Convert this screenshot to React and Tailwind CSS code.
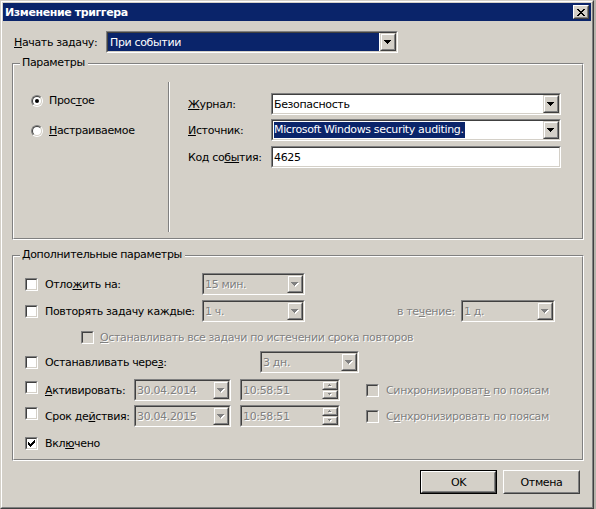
import React from "react";

const dis = "text-[#808080] [text-shadow:1px_1px_0_#ffffff]";

function Tri({ rows, color, shadow }) {
  const w = Math.max(...rows);
  return (
    <svg width={w + 1} height={rows.length + 1} shapeRendering="crispEdges" className="block">
      {shadow &&
        rows.map((r, i) => (
          <rect key={"s" + i} x={(w - r) / 2 + 1} y={i + 1} width={r} height="1" fill="#ffffff" />
        ))}
      {rows.map((r, i) => (
        <rect key={i} x={(w - r) / 2} y={i} width={r} height="1" fill={color} />
      ))}
    </svg>
  );
}

function Raised({ className = "", children }) {
  return (
    <div className={`border border-t-[#d4d0c8] border-l-[#d4d0c8] border-r-[#404040] border-b-[#404040] ${className}`}>
      <div className="h-full w-full border border-t-white border-l-white border-r-[#808080] border-b-[#808080] bg-[#d4d0c8] flex items-center justify-center">
        {children}
      </div>
    </div>
  );
}

function Sunken({ className = "", inner = "bg-white", children }) {
  return (
    <div className={`border border-t-[#808080] border-l-[#808080] border-r-white border-b-white ${className}`}>
      <div className={`h-full w-full border border-t-[#404040] border-l-[#404040] border-r-[#d4d0c8] border-b-[#d4d0c8] flex ${inner}`}>
        {children}
      </div>
    </div>
  );
}

function Combo({ className = "", text, disabled, selectedAll, selectedText }) {
  return (
    <Sunken className={`h-[22px] shrink-0 ${className}`} inner={disabled ? "bg-[#d4d0c8]" : "bg-white"}>
      <div className="flex-1 flex items-center min-w-0 whitespace-nowrap overflow-hidden">
        {selectedAll ? (
          <div className="h-full flex-1 bg-[#0a246a] text-white flex items-center pl-[2px] mr-[1px]">{text}</div>
        ) : selectedText ? (
          <span className="bg-[#0a246a] text-white leading-[16px] ml-[1px] pr-[1px]">{text}</span>
        ) : (
          <span className={`pl-[1px] ${disabled ? dis : ""}`}>{text}</span>
        )}
      </div>
      <Raised className="w-[16px] h-full shrink-0">
        <Tri rows={[7, 5, 3, 1]} color={disabled ? "#808080" : "#000000"} shadow={disabled} />
      </Raised>
    </Sunken>
  );
}

function Spin({ className = "", text }) {
  return (
    <Sunken className={`h-[22px] shrink-0 ${className}`} inner="bg-[#d4d0c8]">
      <div className={`flex-1 flex items-center pl-[1px] ${dis}`}>{text}</div>
      <div className="w-[16px] h-full flex flex-col shrink-0">
        <Raised className="h-[9px]">
          <Tri rows={[1, 3]} color="#808080" shadow />
        </Raised>
        <Raised className="h-[9px]">
          <Tri rows={[3, 1]} color="#808080" shadow />
        </Raised>
      </div>
    </Sunken>
  );
}

const checkRows = [
  "......X",
  ".....XX",
  "X...XXX",
  "XX.XXX.",
  "XXXXX..",
  ".XXX...",
  "..X....",
];

function Check({ checked, disabled, className = "" }) {
  return (
    <Sunken
      className={`w-[13px] h-[13px] shrink-0 ${className}`}
      inner={`${disabled ? "bg-[#d4d0c8]" : "bg-white"} items-center justify-center`}
    >
      {checked && (
        <svg width="7" height="7" shapeRendering="crispEdges" className="block">
          {checkRows.map((row, y) =>
            row.split("").map((c, x) =>
              c === "X" ? <rect key={y + "-" + x} x={x} y={y} width="1" height="1" fill="#000" /> : null
            )
          )}
        </svg>
      )}
    </Sunken>
  );
}

function Radio({ checked }) {
  return (
    <div className="w-[12px] h-[12px] rounded-full border border-t-[#808080] border-l-[#808080] border-r-white border-b-white shrink-0">
      <div className="w-full h-full rounded-full border border-t-[#404040] border-l-[#404040] border-r-[#d4d0c8] border-b-[#d4d0c8] bg-white flex items-center justify-center">
        {checked && <div className="w-[4px] h-[4px] rounded-full bg-black" />}
      </div>
    </div>
  );
}

function Group({ title, className = "", children }) {
  return (
    <div className={`relative border border-t-[#808080] border-l-[#808080] border-r-white border-b-white ${className}`}>
      <div className="h-full w-full border border-t-white border-l-white border-r-[#808080] border-b-[#808080]">
        {children}
      </div>
      <div className="absolute left-[7px] -top-[8px] pl-[2px] pr-[3px] bg-[#d4d0c8] leading-[14px] whitespace-nowrap">
        {title}
      </div>
    </div>
  );
}

function Button({ children, def }) {
  const inner = (
    <div className="h-full w-full border border-t-white border-l-white border-r-[#404040] border-b-[#404040]">
      <div className="h-full w-full border border-t-[#d4d0c8] border-l-[#d4d0c8] border-r-[#808080] border-b-[#808080] bg-[#d4d0c8] flex items-center justify-center">
        {children}
      </div>
    </div>
  );
  return def ? (
    <div className="w-[77px] h-[24px] border border-black">{inner}</div>
  ) : (
    <div className="w-[77px] h-[24px]">{inner}</div>
  );
}

const xRows = ["XX....XX", ".XX..XX.", "..XXXX..", "...XX...", "..XXXX..", ".XX..XX.", "XX....XX"];

export default function App() {
  return (
    <div className="w-[596px] h-[509px] flex bg-[#d4d0c8] font-['DejaVu_Sans',sans-serif] text-[11px] leading-[13px] tracking-[-0.35px] text-black overflow-hidden">
      <div className="w-[594px] h-[509px] shrink-0 border border-t-[#d4d0c8] border-l-[#d4d0c8] border-r-[#404040] border-b-[#404040]">
        <div className="h-full w-full border border-t-white border-l-white border-r-[#808080] border-b-[#808080] p-[1px] flex flex-col">
          {/* Title bar */}
          <div className="h-[18px] shrink-0 bg-[#0a246a] flex items-center justify-between pl-[2px] pr-[2px]">
            <span className="text-white font-bold whitespace-nowrap tracking-[-0.4px]">Изменение триггера</span>
            <div className="w-[16px] h-[14px] border border-t-white border-l-white border-r-[#404040] border-b-[#404040]">
              <div className="h-full w-full border border-t-[#d4d0c8] border-l-[#d4d0c8] border-r-[#808080] border-b-[#808080] bg-[#d4d0c8] flex items-center justify-center">
                <svg width="8" height="7" shapeRendering="crispEdges" className="block">
                  {xRows.map((row, y) =>
                    row.split("").map((c, x) =>
                      c === "X" ? <rect key={y + "-" + x} x={x} y={y} width="1" height="1" fill="#000" /> : null
                    )
                  )}
                </svg>
              </div>
            </div>
          </div>

          {/* Body */}
          <div className="flex-1 flex flex-col">
            {/* Start task */}
            <div className="mt-[10px] pl-[11px] h-[22px] flex items-center">
              <div className="w-[92px] whitespace-nowrap">
                <u>Н</u>ачать задачу:
              </div>
              <Combo className="w-[292px]" text="При событии" selectedAll />
            </div>

            {/* Parameters group */}
            <Group title="Параметры" className="mt-[10px] ml-[9px] w-[572px] h-[177px]">
              <div className="flex h-full">
                <div className="w-[154px] pl-[17px] pt-[29px] flex flex-col">
                  <div className="h-[13px] flex items-center">
                    <Radio checked />
                    <span className="ml-[6px] whitespace-nowrap">
                      Прос<u>т</u>ое
                    </span>
                  </div>
                  <div className="mt-[17px] h-[13px] flex items-center">
                    <Radio />
                    <span className="ml-[6px] whitespace-nowrap">
                      <u>Н</u>астраиваемое
                    </span>
                  </div>
                </div>
                <div className="mt-[17px] h-[150px] w-[2px] border-l border-l-[#808080] border-r border-r-white" />
                <div className="pl-[18px] pt-[28px] flex flex-col">
                  <div className="h-[22px] flex items-center">
                    <div className="w-[83px] whitespace-nowrap">
                      <u>Ж</u>урнал:
                    </div>
                    <Combo className="w-[290px]" text="Безопасность" />
                  </div>
                  <div className="mt-[4px] h-[22px] flex items-center">
                    <div className="w-[83px] whitespace-nowrap">
                      <u>И</u>сточник:
                    </div>
                    <Combo className="w-[290px]" text="Microsoft Windows security auditing." selectedText />
                  </div>
                  <div className="mt-[5px] h-[22px] flex items-center">
                    <div className="w-[83px] whitespace-nowrap">
                      Код со<u>бы</u>тия:
                    </div>
                    <Sunken className="w-[290px] h-[22px]" inner="bg-white items-center">
                      <span className="pl-[1px]">4625</span>
                    </Sunken>
                  </div>
                </div>
              </div>
            </Group>

            {/* Additional parameters group */}
            <Group title="Дополнительные параметры" className="mt-[15px] ml-[9px] w-[572px] h-[206px]">
              <div className="flex flex-col pl-[11px]">
                <div className="mt-[16px] h-[22px] flex items-center">
                  <Check />
                  <div className="ml-[7px] w-[157px] whitespace-nowrap">
                    Отло<u>ж</u>ить на:
                  </div>
                  <Combo className="w-[103px]" text="15 мин." disabled />
                </div>
                <div className="mt-[5px] h-[22px] flex items-center">
                  <Check />
                  <div className="ml-[7px] w-[157px] whitespace-nowrap">Повторять задачу каждые:</div>
                  <Combo className="w-[103px]" text="1 ч." disabled />
                  <div className={`ml-[92px] w-[64px] whitespace-nowrap ${dis}`}>
                    в те<u>ч</u>ение:
                  </div>
                  <Combo className="w-[94px]" text="1 д." disabled />
                </div>
                <div className="mt-[9px] h-[13px] pl-[56px] flex items-center">
                  <Check disabled />
                  <span className={`ml-[6px] whitespace-nowrap ${dis}`}>
                    <u>О</u>станавливать все задачи по истечении срока повторов
                  </span>
                </div>
                <div className="mt-[7px] h-[22px] flex items-center">
                  <Check />
                  <div className="ml-[7px] w-[215px] whitespace-nowrap">
                    Останавливать чере<u>з</u>:
                  </div>
                  <Combo className="w-[99px]" text="3 дн." disabled />
                </div>
                <div className="mt-[6px] h-[22px] flex items-center">
                  <Check className="mb-[6px]" />
                  <div className="ml-[7px] w-[89px] whitespace-nowrap">
                    <u>А</u>ктивировать:
                  </div>
                  <Combo className="w-[97px]" text="30.04.2014" disabled />
                  <Spin className="ml-[9px] w-[100px]" text="10:58:51" />
                  <Check disabled className="ml-[26px]" />
                  <span className={`ml-[7px] whitespace-nowrap ${dis}`}>
                    Синхронизироват<u>ь</u> по поясам
                  </span>
                </div>
                <div className="mt-[4px] h-[22px] flex items-center">
                  <Check className="mb-[6px]" />
                  <div className="ml-[7px] w-[89px] whitespace-nowrap">
                    Срок де<u>й</u>ствия:
                  </div>
                  <Combo className="w-[97px]" text="30.04.2015" disabled />
                  <Spin className="ml-[9px] w-[100px]" text="10:58:51" />
                  <Check disabled className="ml-[26px]" />
                  <span className={`ml-[7px] whitespace-nowrap ${dis}`}>
                    С<u>и</u>нхронизировать по поясам
                  </span>
                </div>
                <div className="mt-[10px] h-[13px] flex items-center">
                  <Check checked />
                  <span className="ml-[7px] whitespace-nowrap">
                    Вкл<u>ю</u>чено
                  </span>
                </div>
              </div>
            </Group>

            {/* Buttons */}
            <div className="mt-[9px] pr-[11px] flex justify-end gap-[6px]">
              <Button def>OK</Button>
              <Button>Отмена</Button>
            </div>
          </div>
        </div>
      </div>
      <div className="w-[2px] h-full bg-[#b8b4ac]" />
    </div>
  );
}
